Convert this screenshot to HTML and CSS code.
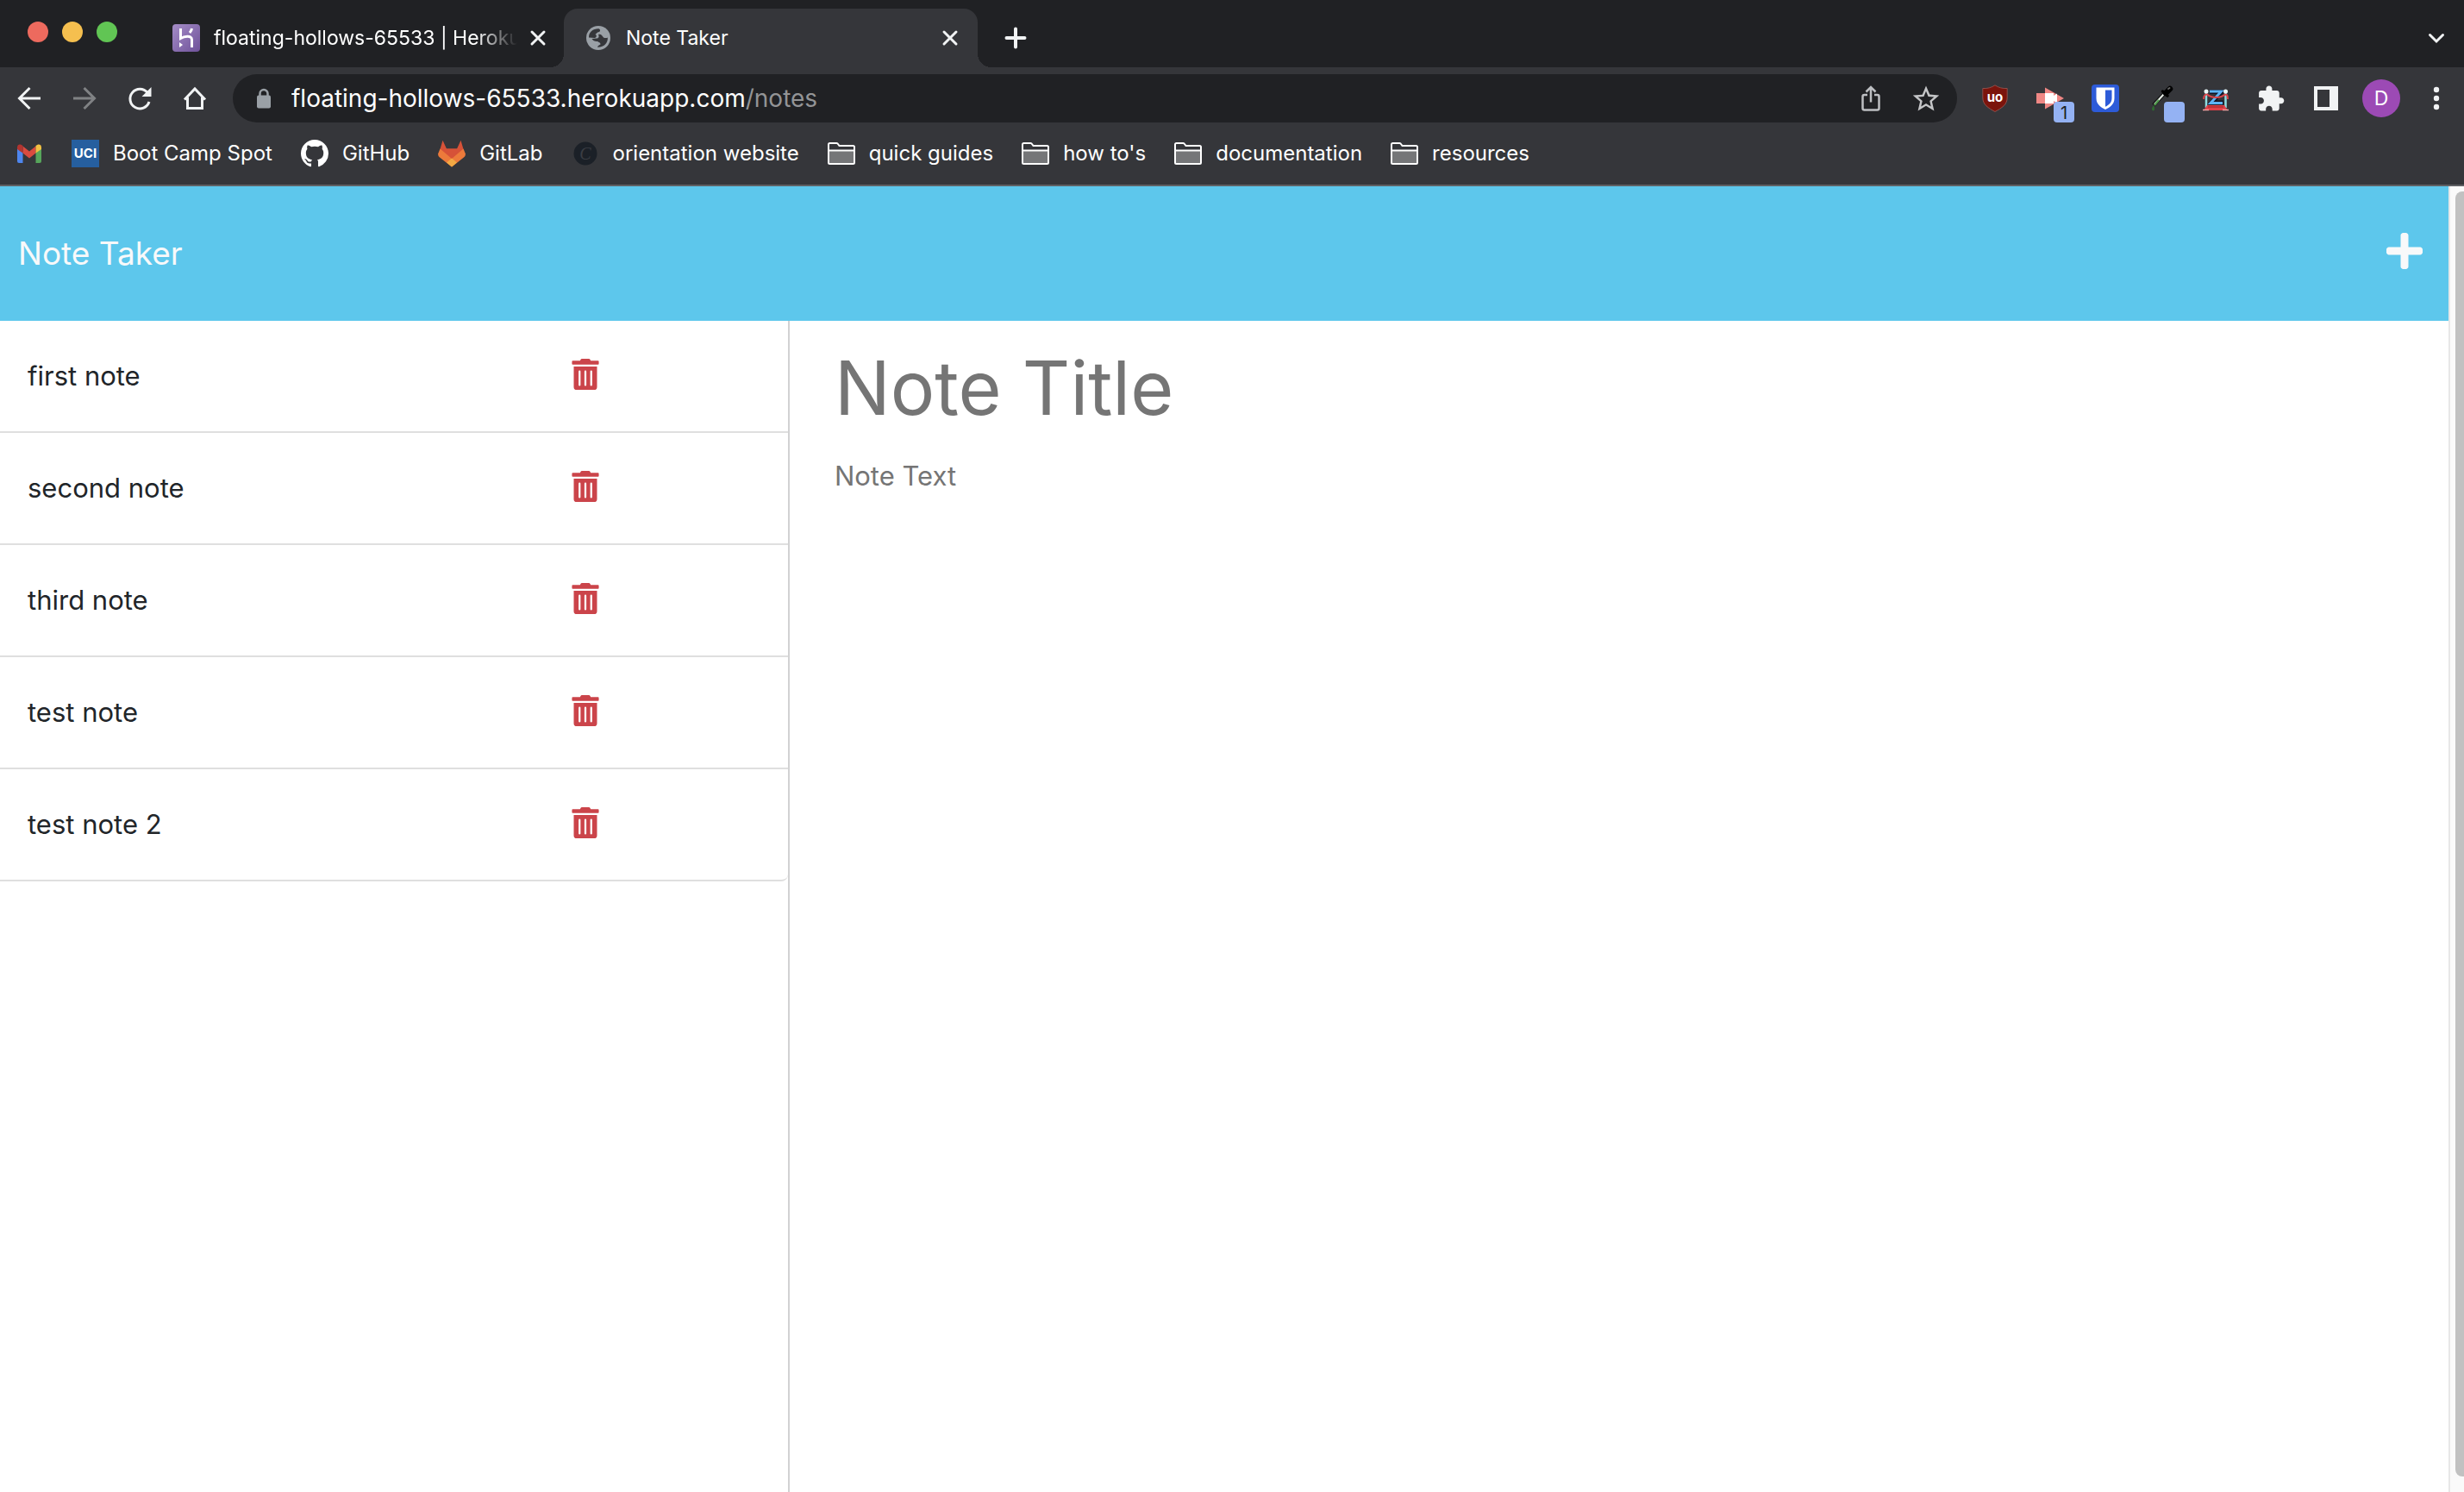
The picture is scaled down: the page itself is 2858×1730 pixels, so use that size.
FILE: index.html
```html
<!DOCTYPE html>
<html lang="en">
<head>
<meta charset="utf-8">
<meta name="viewport" content="width=device-width, initial-scale=1">
<title>Note Taker</title>
<link rel="stylesheet" href="styles.css">
</head>
<body>
<div class="browser">
  <header class="chrome">
    <div class="tab-strip">
      <div class="lights">
        <button class="light light-close" aria-label="Close window"></button>
        <button class="light light-min" aria-label="Minimize window"></button>
        <button class="light light-max" aria-label="Zoom window"></button>
      </div>
      <div class="tab">
        <svg class="icon" viewBox="0 0 32 32" aria-hidden="true">
          <defs><linearGradient id="heroku" x1="0" y1="0" x2="1" y2="1"><stop offset="0" stop-color="#a48cc6"/><stop offset="1" stop-color="#6f529a"/></linearGradient></defs>
          <rect width="32" height="32" rx="4" fill="url(#heroku)"/>
          <path d="M9.500 5V16.500C13 14.500 22.500 12 22.500 18V27M22.500 5C22.200 7 21.200 8.700 20 10" fill="none" stroke="#fff" stroke-width="3"/>
          <path d="M8 21v6l4-3z" fill="#fff"/>
        </svg>
        <span class="tab-title tab-title-fade">floating-hollows-65533 | Heroku</span>
        <button class="icon-button" aria-label="Close tab"><svg class="icon" viewBox="0 0 32 32"><path d="M9 9L23 23M23 9L9 23" class="line"/></svg></button>
      </div>
      <div class="tab tab-active">
        <svg class="icon" viewBox="0 0 32 32" aria-hidden="true">
          <circle cx="16" cy="16" r="14" fill="#9aa0a6"/>
          <path d="M5 15C5 9 10 5 16.500 5.200C18.500 6 18.500 8 17 9C14 9.500 14 11 12.500 12C15 13 13.500 15.500 12 16L5 15.500ZM16 12C19 11 20 13 22 15.500C24 16.500 26 16 26.800 15.500C27.500 21 23 27 15 26.800C15 25.500 16.500 24.500 18.500 23.500C18.500 21 16 21 15 20C11 20 10 19 8.500 17L14 16.500C17 16.500 17 14 16 12Z" fill="#35363a"/>
        </svg>
        <span class="tab-title">Note Taker</span>
        <button class="icon-button" aria-label="Close tab"><svg class="icon" viewBox="0 0 32 32"><path d="M9 9L23 23M23 9L9 23" class="line"/></svg></button>
      </div>
      <button class="icon-button new-tab" aria-label="New tab"><svg class="icon" viewBox="0 0 32 32"><path d="M16 5.500V26.500M5.500 16H26.500" class="line line-thick"/></svg></button>
      <button class="slot-button tab-search" aria-label="Search tabs"><svg class="icon" viewBox="0 0 32 32"><path d="M8.500 12.500L16 20L23.500 12.500" class="line"/></svg></button>
    </div>

    <div class="toolbar">
      <nav class="slots" aria-label="History">
        <button class="slot-button" aria-label="Back"><svg class="icon" viewBox="0 0 32 32"><path d="M29 16H5M16.500 4L4.500 16L16.500 28" class="line line-flat"/></svg></button>
        <button class="slot-button is-dim" aria-label="Forward"><svg class="icon" viewBox="0 0 32 32"><path d="M3 16H27M15.500 4L27.500 16L15.500 28" class="line line-flat"/></svg></button>
        <button class="slot-button" aria-label="Reload"><svg class="icon" viewBox="0 0 32 32"><path d="M25 9.500A11.300 11.300 0 1 0 27 20" class="line line-flat"/><path d="M29.500 3V14H18.500Z" fill="#f1f3f4"/></svg></button>
        <button class="slot-button" aria-label="Home"><svg class="icon" viewBox="0 0 32 32"><path d="M4 17.500L16 5L28 17.500M7.500 15V27.500H24.500V15" class="line line-flat"/></svg></button>
      </nav>
      <div class="omnibox">
        <svg class="icon" viewBox="0 0 32 32" aria-hidden="true"><rect x="8" y="12.500" width="16" height="15" rx="2" fill="#9aa0a6"/><path d="M11.500 13V10.500A4.500 4.500 0 0 1 20.500 10.500V13" fill="none" stroke="#9aa0a6" stroke-width="2.500"/></svg>
        <label class="url"><input class="url-host" type="text" aria-label="Address" value="floating-hollows-65533.herokuapp.com" spellcheck="false"><span class="url-path">/notes</span></label>
        <button class="slot-button" aria-label="Share"><svg class="icon" viewBox="0 0 32 32"><path d="M12 12H8.500Q6.500 12 6.500 14V27.500Q6.500 29.500 8.500 29.500H23.500Q25.500 29.500 25.500 27.500V14Q25.500 12 23.500 12H20M16 20.500V4M10.500 8.500L16 3L21.500 8.500" fill="none" stroke="#bdbfc2" stroke-width="2.500"/></svg></button>
        <button class="slot-button" aria-label="Bookmark this tab"><svg class="icon" viewBox="1.500 1 21 21"><path fill="#c4c5c7" d="M22 9.240l-7.190-.62L12 2 9.190 8.630 2 9.240l5.460 4.730L5.820 21 12 17.270 18.180 21l-1.630-7.030L22 9.240zM12 15.400l-3.760 2.270 1-4.280-3.320-2.880 4.380-.38L12 6.100l1.710 4.040 4.380.38-3.320 2.880 1 4.280L12 15.400z"/></svg></button>
      </div>
      <div class="slots">
        <button class="slot-button" aria-label="uBlock Origin"><svg class="icon" viewBox="0 0 32 32"><path d="M16 .8C12 3.500 7 5 1.800 4.500V15C1.800 23.500 8 27 16 31.500C24 27 30.200 23.500 30.200 15V4.500C25 5 20 3.500 16 .8Z" fill="#7b140c" stroke="#9b5a55" stroke-width=".8"/><text x="16" y="20" text-anchor="middle" class="ublock-text">uo</text></svg></button>
        <button class="slot-button" aria-label="Recorder, 1 item"><svg class="icon" viewBox="0 0 32 32"><path d="M0 10H10V3.500L32 16L10 28.500V22H0Z" fill="#ef8784"/><path d="M10 10H20V13L24 10.500V21.500L20 19V22H10Z" fill="#fff"/></svg><span class="badge">1</span></button>
        <button class="slot-button" aria-label="Bitwarden"><svg class="icon" viewBox="0 0 32 32"><rect width="32" height="32" rx="4" fill="#2d5bd8"/><path d="M5.500 3.500H26.500V16C26.500 23 21 26.500 16 29C11 26.500 5.500 23 5.500 16Z" fill="#fff"/><path d="M16 6.500H23.500V16C23.500 21 20 23.500 16 25.800Z" fill="#2d5bd8"/></svg></button>
        <button class="slot-button" aria-label="Color picker"><svg class="icon" viewBox="0 0 32 32"><path d="M20 11L10.500 21L8 24" stroke="#151515" stroke-width="4.500"/><path d="M20 11L9 23" stroke="#e8eee8" stroke-width="2"/><path d="M14 18L9 24" stroke="#4e9a4a" stroke-width="2"/><path d="M18.500 8L24 13" stroke="#000" stroke-width="3.500" stroke-linecap="round"/><path d="M22 10L27 5" stroke="#000" stroke-width="6.500" stroke-linecap="round"/><path d="M25 5L26.500 4" stroke="#666" stroke-width="2" stroke-linecap="round"/><path d="M8 24C6 27 5.500 28 6.500 30C9 31 10 29 8 24Z" fill="#2f6b30"/></svg><span class="badge"></span></button>
        <button class="slot-button" aria-label="Zoom scheduler"><svg class="icon" viewBox="0 0 32 32"><path d="M9 8.500H23L11 21H25" fill="none" stroke="#112" stroke-width="5"/><path d="M9 8H22.500L10 21.500H24" fill="none" stroke="#5cb3f5" stroke-width="3"/><path d="M5 9V27M27.500 9V27" stroke="#8fdde0" stroke-width="2.500"/><path d="M2 17C2 12 5 11 6 11.500C11 16 22 16 27 11.500C29 11 30 13 30 17" fill="none" stroke="#d8444a" stroke-width="2"/><path d="M6 24H26L30 30H2Z" fill="#df4148"/><path d="M7 26H25" stroke="#922" stroke-width="1"/><path d="M1 29.500H8M24 29.500H31" stroke="#f2a0a0" stroke-width="1.500"/><circle cx="5" cy="8" r="2.500" fill="#e9fafa"/><circle cx="27.500" cy="8" r="2.500" fill="#e9fafa"/></svg></button>
        <button class="slot-button" aria-label="Extensions"><svg class="icon" viewBox="0.500 0 23 23"><path fill="#f1f3f4" d="M20.500 11H19V7c0-1.100-.9-2-2-2h-4V3.500C13 2.120 11.880 1 10.500 1S8 2.120 8 3.500V5H4c-1.100 0-1.990.9-1.990 2v3.800H3.500c1.490 0 2.700 1.210 2.700 2.700s-1.210 2.700-2.700 2.700H2V20c0 1.100.9 2 2 2h3.800v-1.500c0-1.490 1.210-2.700 2.700-2.700 1.490 0 2.700 1.210 2.700 2.700V22H17c1.100 0 2-.9 2-2v-4h1.500c1.380 0 2.500-1.120 2.500-2.500S21.880 11 20.500 11z"/></svg></button>
        <button class="slot-button" aria-label="Side panel"><svg class="icon" viewBox="0 0 32 32"><path fill="#f1f3f4" fill-rule="evenodd" d="M2 2H30V30H2ZM6 6V26H20V6Z"/></svg></button>
        <button class="slot-button" aria-label="Profile"><span class="avatar">D</span></button>
        <button class="slot-button" aria-label="Menu"><svg class="icon" viewBox="0 0 32 32"><g fill="#f1f3f4"><circle cx="16" cy="6" r="3.200"/><circle cx="16" cy="16" r="3.200"/><circle cx="16" cy="26" r="3.200"/></g></svg></button>
      </div>
    </div>

    <nav class="bookmarks" aria-label="Bookmarks">
      <a href="#" class="bookmark" aria-label="Gmail"><svg class="icon" viewBox="0 0 32 32"><path d="M2 9.500L8.500 14V27H4Q2 27 2 25Z" fill="#4e86ee"/><path d="M30 9.500L23.500 14V27H28Q30 27 30 25Z" fill="#57a65b"/><path d="M8.500 7.500L16 13.500L23.500 7.500V15.500L16 21.500L8.500 15.500Z" fill="#da4b40"/><path d="M2 9C2 4.800 6 4.500 8.500 7V15.500L2 11Z" fill="#b23530"/><path d="M30 9C30 4.800 26 4.500 23.500 7V15.500L30 11Z" fill="#f2c043"/></svg></a>
      <a href="#" class="bookmark"><svg class="icon" viewBox="0 0 32 32" aria-hidden="true"><rect width="32" height="32" fill="#265f9f"/><text x="16" y="21" text-anchor="middle" class="uci-text">UCI</text></svg>Boot Camp Spot</a>
      <a href="#" class="bookmark"><svg class="icon" viewBox="0 0 16 16" aria-hidden="true"><path fill="#fff" d="M8 0C3.580 0 0 3.580 0 8c0 3.540 2.290 6.530 5.470 7.590.4.070.55-.17.55-.38 0-.19-.01-.82-.01-1.490-2.010.37-2.530-.49-2.690-.94-.09-.23-.48-.94-.82-1.130-.28-.15-.68-.52-.01-.53.63-.01 1.080.58 1.230.82.72 1.210 1.870.87 2.330.66.070-.52.28-.87.51-1.070-1.780-.2-3.640-.89-3.640-3.950 0-.87.31-1.590.82-2.150-.08-.2-.36-1.020.08-2.120 0 0 .67-.21 2.200.82.64-.18 1.320-.27 2-.27.68 0 1.360.09 2 .27 1.530-1.040 2.200-.82 2.200-.82.44 1.100.16 1.920.08 2.120.51.56.82 1.270.82 2.150 0 3.070-1.870 3.750-3.650 3.950.29.25.54.73.54 1.480 0 1.070-.01 1.930-.01 2.200 0 .21.15.46.55.38A8.013 8.013 0 0016 8c0-4.420-3.580-8-8-8z"/></svg>GitHub</a>
      <a href="#" class="bookmark"><svg class="icon" viewBox="0 0 32 32" aria-hidden="true"><path d="M5.500 .8L10 10.500H22L26.500 .8L29.500 11L16 31L2.500 11Z" fill="#d65238"/><path d="M2.500 10.500L0 16.500Q0 19 2 20.500L16 31.500L30 20.500Q32 19 32 16.500L29.500 10.500L16 22Z" fill="#ec7a3b"/><path d="M2.500 10.500Q9 11.500 16 21.500Q23 11.500 29.500 10.500L22 10.500H10Z" fill="#d65238"/><path d="M16 21.500L22 26.500L16 31.500L10 26.500Z" fill="#f2a944"/></svg>GitLab</a>
      <a href="#" class="bookmark"><svg class="icon" viewBox="0 0 32 32" aria-hidden="true"><circle cx="16" cy="16" r="13.500" fill="#1b2027"/><text x="16" y="23" text-anchor="middle" class="script-text">C</text></svg>orientation website</a>
      <a href="#" class="bookmark"><svg class="icon" viewBox="0 0 32 32" aria-hidden="true"><use href="#folder"/></svg>quick guides</a>
      <a href="#" class="bookmark"><svg class="icon" viewBox="0 0 32 32" aria-hidden="true"><use href="#folder"/></svg>how to's</a>
      <a href="#" class="bookmark"><svg class="icon" viewBox="0 0 32 32" aria-hidden="true"><use href="#folder"/></svg>documentation</a>
      <a href="#" class="bookmark"><svg class="icon" viewBox="0 0 32 32" aria-hidden="true"><use href="#folder"/></svg>resources</a>
    </nav>
  </header>

  <div class="viewport">
    <div class="page">
      <header class="app-bar">
        <a href="#" class="brand">Note Taker</a>
        <button class="add-note" aria-label="New note"><svg class="plus-icon" viewBox="0 0 448 512"><path fill="#f8f9fa" d="M416 208H272V64c0-17.670-14.330-32-32-32h-32c-17.670 0-32 14.330-32 32v144H32c-17.670 0-32 14.330-32 32v32c0 17.670 14.330 32 32 32h144v144c0 17.670 14.330 32 32 32h32c17.670 0 32-14.330 32-32V304h144c17.670 0 32-14.330 32-32v-32c0-17.670-14.330-32-32-32z"/></svg></button>
      </header>
      <main class="notes">
        <ul class="note-list">
          <li class="note"><span>first note</span><button class="delete" aria-label="Delete first note"><svg class="trash-icon" viewBox="0 0 448 512"><use href="#trash"/></svg></button></li>
          <li class="note"><span>second note</span><button class="delete" aria-label="Delete second note"><svg class="trash-icon" viewBox="0 0 448 512"><use href="#trash"/></svg></button></li>
          <li class="note"><span>third note</span><button class="delete" aria-label="Delete third note"><svg class="trash-icon" viewBox="0 0 448 512"><use href="#trash"/></svg></button></li>
          <li class="note"><span>test note</span><button class="delete" aria-label="Delete test note"><svg class="trash-icon" viewBox="0 0 448 512"><use href="#trash"/></svg></button></li>
          <li class="note"><span>test note 2</span><button class="delete" aria-label="Delete test note 2"><svg class="trash-icon" viewBox="0 0 448 512"><use href="#trash"/></svg></button></li>
        </ul>
        <form class="editor">
          <input class="editor-title" type="text" placeholder="Note Title" aria-label="Note title" maxlength="28">
          <textarea class="editor-text" placeholder="Note Text" aria-label="Note text"></textarea>
        </form>
      </main>
    </div>
    <div class="scrollbar" aria-hidden="true"><div class="scroll-thumb"></div></div>
  </div>
</div>

<svg class="symbols" aria-hidden="true">
  <symbol id="folder" viewBox="0 0 32 32"><path d="M1 12H31V27H1Z" fill="#757678"/><path d="M1 12.500H31M1 26.500V5.500Q1 4 2.500 4H10.500Q11.500 4 12 5L13.500 7H29.500Q31 7 31 8.500V26.500Q31 28 29.500 28H2.500Q1 28 1 26.500Z" fill="none" stroke="#fff" stroke-width="2"/></symbol>
  <symbol id="trash" viewBox="0 0 448 512"><path fill="#cb444a" d="M32 464a48 48 0 0 0 48 48h288a48 48 0 0 0 48-48V128H32zm272-256a16 16 0 0 1 32 0v224a16 16 0 0 1-32 0zm-96 0a16 16 0 0 1 32 0v224a16 16 0 0 1-32 0zm-96 0a16 16 0 0 1 32 0v224a16 16 0 0 1-32 0zM432 32H312l-9.400-18.700A24 24 0 0 0 281.100 0H166.800a23.720 23.720 0 0 0-21.400 13.300L136 32H16A16 16 0 0 0 0 48v32a16 16 0 0 0 16 16h416a16 16 0 0 0 16-16V48a16 16 0 0 0-16-16z"/></symbol>
</svg>
</body>
</html>
```

FILE: styles.css
```css
* {
  box-sizing: border-box;
}

body {
  margin: 0;
  background: #fff;
  color: #212529;
  font-family: Inter, "Liberation Sans", sans-serif;
}

button {
  padding: 0;
  border: 0;
  background: none;
  font: inherit;
  color: inherit;
}

a {
  color: inherit;
  text-decoration: none;
}

.browser {
  display: flex;
  flex-direction: column;
  height: 100vh;
}

/* Browser frame */

.chrome {
  background: #35363a;
  border-bottom: 2px solid #5f6064;
  color: #fff;
  font-size: 24px;
}

.icon {
  display: block;
  flex: none;
  width: 32px;
  height: 32px;
}

.line {
  fill: none;
  stroke: #f1f3f4;
  stroke-width: 3;
  stroke-linecap: round;
}

.line-thick {
  stroke-width: 4;
}

.line-flat {
  stroke-linecap: butt;
}

.is-dim {
  opacity: 0.4;
}

.tab-strip {
  display: flex;
  align-items: center;
  height: 78px;
  padding-top: 10px;
  background: #202124;
}

.lights {
  display: flex;
  gap: 16px;
  padding: 0 40px 14px 32px;
}

.light {
  width: 24px;
  height: 24px;
  border-radius: 50%;
}

.light-close {
  background: #ed6a5e;
}

.light-min {
  background: #f5bf4f;
}

.light-max {
  background: #61c554;
}

.tab {
  display: flex;
  align-items: center;
  gap: 16px;
  width: 480px;
  height: 68px;
  padding: 0 16px 0 24px;
}

.tab-active {
  position: relative;
  margin-left: -2px;
  border-radius: 16px 16px 0 0;
  background: #35363a;
}

.tab-active::before,
.tab-active::after {
  content: "";
  position: absolute;
  bottom: 0;
  width: 16px;
  height: 16px;
}

.tab-active::before {
  right: 100%;
  background: radial-gradient(circle at 0 0, transparent 16px, #35363a 16px);
}

.tab-active::after {
  left: 100%;
  background: radial-gradient(circle at 100% 0, transparent 16px, #35363a 16px);
}

.tab-title {
  flex: 1;
  min-width: 0;
  overflow: hidden;
  font-size: 23px;
  line-height: 32px;
  white-space: nowrap;
}

.tab-title-fade {
  margin-right: -8px;
  mask-image: linear-gradient(to right, #000 304px, transparent 352px);
}

.new-tab {
  margin-left: 28px;
}

.tab-search {
  margin-left: auto;
}

.toolbar {
  display: flex;
  align-items: center;
  height: 72px;
  padding-left: 2px;
}

.slots {
  display: flex;
}

.slot-button {
  position: relative;
  display: flex;
  align-items: center;
  justify-content: center;
  width: 64px;
  height: 56px;
}

.omnibox {
  display: flex;
  flex: 1;
  align-items: center;
  height: 56px;
  margin: 0 12px;
  padding: 0 4px 0 20px;
  border-radius: 28px;
  background: #202124;
}

.url {
  display: flex;
  flex: 1;
  align-items: center;
  padding-left: 16px;
  font-size: 28px;
  line-height: 40px;
}

.url-host {
  field-sizing: content;
  padding: 0;
  border: 0;
  outline: 0;
  background: none;
  color: #fff;
  font: inherit;
}

.url-path {
  color: #939496;
}

.badge {
  position: absolute;
  right: 4px;
  bottom: 0;
  width: 24px;
  height: 24px;
  border-radius: 4px;
  background: #94b2f3;
  color: #202124;
  font-size: 20px;
  line-height: 26px;
  text-align: center;
}

.avatar {
  width: 44px;
  height: 44px;
  border-radius: 50%;
  background: #9c4ab5;
  font-size: 23px;
  line-height: 44px;
  text-align: center;
}

.ublock-text {
  fill: #fff;
  font-size: 15px;
  font-weight: 700;
}

.uci-text {
  fill: #fff;
  font-size: 15px;
  font-weight: 700;
}

.script-text {
  fill: #3a3d43;
  font-family: "Liberation Serif", serif;
  font-size: 20px;
  font-style: italic;
}

.bookmarks {
  display: flex;
  align-items: center;
  gap: 33px;
  height: 64px;
  padding: 0 18px 8px;
}

.bookmark {
  display: flex;
  align-items: center;
  gap: 16px;
  line-height: 32px;
  white-space: nowrap;
}

/* Note Taker page */

.viewport {
  display: flex;
  flex: 1;
  min-height: 0;
}

.page {
  display: flex;
  flex: 1;
  flex-direction: column;
  min-width: 0;
}

.app-bar {
  display: flex;
  align-items: center;
  justify-content: space-between;
  height: 156px;
  padding: 0 30px 0 21px;
  background: #5dc7ec;
  color: #f8f9fa;
}

.brand {
  font-size: 37px;
  line-height: 60px;
}

.add-note {
  padding-bottom: 6px;
}

.plus-icon {
  display: block;
  width: 42px;
  height: 48px;
}

.notes {
  display: flex;
  flex: 1;
  min-height: 0;
}

.note-list {
  width: 32.25%;
  margin: 0;
  padding: 0;
  border-right: 2px solid #d2d2d3;
  list-style: none;
}

.note {
  display: flex;
  align-items: center;
  justify-content: space-between;
  height: 130px;
  padding: 0 24% 0 32px;
  border-bottom: 2px solid #dfdfdf;
  font-size: 31px;
  line-height: 48px;
}

.note:last-child {
  border-radius: 0 0 8px;
}

.delete {
  padding-bottom: 4px;
}

.trash-icon {
  display: block;
  width: 32px;
  height: 36px;
}

.editor {
  display: flex;
  flex: 1;
  flex-direction: column;
  padding: 6px 48px 0 52px;
}

.editor-title,
.editor-text {
  width: 100%;
  padding: 0;
  border: 0;
  outline: 0;
  background: transparent;
  color: #212529;
  font-family: inherit;
}

.editor-title {
  height: 144px;
  font-size: 86px;
  line-height: 144px;
}

.editor-text {
  flex: 1;
  margin-top: 6px;
  font-size: 31px;
  line-height: 48px;
  resize: none;
}

.editor-title::placeholder,
.editor-text::placeholder {
  color: #757575;
  opacity: 1;
}

.scrollbar {
  width: 18px;
  padding: 6px 0 18px 6px;
  border-left: 2px solid #e7e7e7;
  background: #fafafa;
}

.scroll-thumb {
  height: 100%;
  border-radius: 8px 0 0 8px;
  background: #c1c1c1;
}

.symbols {
  display: none;
}
```
